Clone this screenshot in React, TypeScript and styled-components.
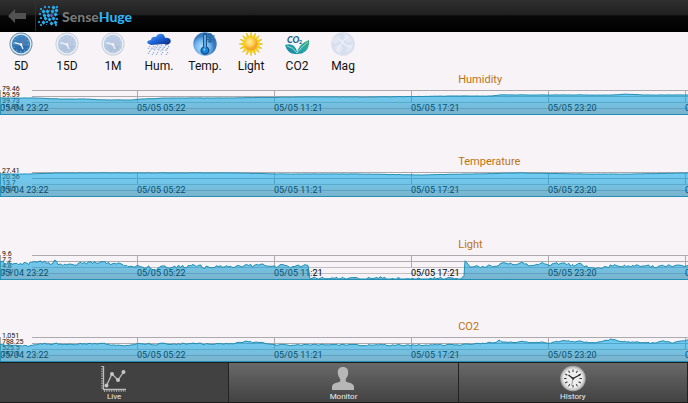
import React from "react";
import styled, { createGlobalStyle, css } from "styled-components";

const GlobalStyle = createGlobalStyle`
  * { box-sizing: border-box; }
  body { margin: 0; background: #f7f3f7; font-family: Roboto, "Noto Sans", sans-serif; }
`;

const Screen = styled.div`
  display: flex;
  flex-direction: column;
  min-height: 100vh;
  overflow: hidden;
  background: #f7f3f7;
`;

const Header = styled.header`
  display: flex;
  align-items: center;
  height: 32px;
  background: linear-gradient(#303030, #202020 45%, #080808 50%, #000 100%);
`;

const BackButton = styled.button`
  display: flex;
  align-items: center;
  justify-content: center;
  width: 36px;
  height: 30px;
  padding: 0 2px 0 0;
  border: 0;
  border-right: 1px solid #303030;
  background: none;
`;

const Brand = styled.h1`
  display: flex;
  align-items: center;
  gap: 3px;
  margin: 0 0 0 2px;
  font: 900 14px/20px Lato, sans-serif;
  color: #2eb2f2;
`;

const BrandName = styled.span`
  padding-top: 2px;
`;

const BrandMuted = styled.span`
  color: #77797b;
`;

const Toolbar = styled.nav`
  display: flex;
  gap: 4px;
  height: 40px;
`;

const Tool = styled.button<{ $dim?: boolean }>`
  display: flex;
  flex-direction: column;
  align-items: center;
  width: 42px;
  padding: 0;
  border: 0;
  background: none;
  color: #111;
  font: 12px/16px Roboto, sans-serif;

  svg {
    flex: none;
    margin-bottom: 2px;
    opacity: ${(p) => (p.$dim ? 0.35 : 1)};
  }
`;

const Charts = styled.main`
  display: flex;
  flex: 1;
  flex-direction: column;
  justify-content: space-between;
`;

const ChartTitle = styled.h2`
  margin: 0 0 3px;
  padding: 1px 0 0 66.6%;
  color: #bd7310;
  font: 11px/14px Roboto, sans-serif;
`;

const Plot = styled.div`
  position: relative;
  height: 25px;
`;

const Layer = styled.svg`
  position: absolute;
  inset: 0;
  width: 100%;
  height: 100%;
  overflow: hidden;
`;

const Scale = styled.div`
  position: absolute;
  top: -4px;
  left: 2px;
  color: #111;
  font: 7px/6px Roboto, sans-serif;
`;

const TimeLabel = styled.span`
  position: absolute;
  top: 12px;
  color: #000;
  font: 9px/12px Roboto, sans-serif;
  white-space: nowrap;
`;

const Tabs = styled.nav`
  display: grid;
  grid-template-columns: repeat(3, 1fr);
  height: 41px;
  border-top: 1px solid #1b1b1b;
  border-bottom: 1px solid #1b1b1b;
`;

const Tab = styled.button<{ $active?: boolean }>`
  display: flex;
  flex-direction: column;
  align-items: center;
  padding: 2px 0 0;
  border: 0;
  border-right: 1px solid #222;
  color: #eee;
  font: 8px/10px Roboto, sans-serif;
  ${(p) =>
    p.$active
      ? css`background: #414141;`
      : css`background: linear-gradient(#6a696a, #434243);`}
`;

const WIDTH = 688;
const HEIGHT = 25;
const TICKS = [0, 137, 274, 411, 548, 685];
const TIMES = ["05/04 23:22", "05/05 05:22", "05/05 11:21", "05/05 17:21", "05/05 23:20", "05/06 05:20"];

type Point = [number, number];
type Series = { name: string; scale: string[]; noise: number; points: Point[] };

const SERIES: Series[] = [
  {
    name: "Humidity",
    scale: ["79.46", "59.59", "39.73", "19.86"],
    noise: 0.15,
    points: [[0, 8], [32, 8], [60, 9], [85, 9], [102, 10], [132, 10], [142, 9], [170, 8], [230, 8], [300, 7], [370, 7], [458, 6], [490, 6], [500, 5], [560, 5], [612, 5], [625, 4], [645, 5], [688, 5]],
  },
  {
    name: "Temperature",
    scale: ["27.41", "20.56", "13.7", "6.85"],
    noise: 0.15,
    points: [[0, 2], [30, 2], [60, 1], [110, 1], [140, 1], [180, 1], [210, 1], [230, 1], [280, 2], [360, 2], [420, 3], [470, 2], [520, 1], [580, 2], [610, 2], [630, 2], [688, 1]],
  },
  {
    name: "Light",
    scale: ["9.6", "7.2", "4.8", "2.4"],
    noise: 2,
    points: [[0, 8], [52, 8], [55, 6], [57, 9], [90, 8], [124, 10], [135, 12], [160, 13], [180, 11], [200, 12], [230, 12], [270, 11], [304, 11], [308, 11], [310, 24], [350, 24], [366, 23], [400, 24], [461, 24], [464, 22], [465, 7], [470, 11], [500, 10], [560, 9], [600, 12], [618, 9], [650, 11], [688, 11]],
  },
  {
    name: "CO2",
    scale: ["1,051", "788.25", "525.5", "262.8"],
    noise: 0.9,
    points: [[0, 8], [15, 8], [30, 9], [45, 7], [80, 7], [100, 7], [120, 9], [140, 7], [180, 7], [184, 6], [188, 7], [230, 7], [245, 5], [270, 7], [280, 8], [330, 8], [400, 8], [460, 8], [480, 6], [496, 5], [499, 3], [502, 6], [530, 5], [548, 6], [565, 4], [580, 5], [596, 5], [611, 2], [625, 4], [650, 6], [664, 4], [672, 6], [688, 3]],
  },
];

function trace({ points, noise }: Series): string {
  const out: string[] = [];
  let seed = 17;
  let drift = 0;
  let segment = 0;
  for (let x = 0; x <= WIDTH; x += 1) {
    while (segment < points.length - 2 && x > points[segment + 1][0]) segment += 1;
    const [x0, y0] = points[segment];
    const [x1, y1] = points[segment + 1];
    if (x % 2 === 0) {
      seed = (seed * 16807) % 2147483647;
      drift = drift * 0.45 + (seed / 2147483647 - 0.5) * noise * 1.6;
    }
    const y = y0 + ((y1 - y0) * (x - x0)) / (x1 - x0) + drift;
    out.push(`${x} ${Math.min(24, Math.max(0.5, y)).toFixed(2)}`);
  }
  return out.join("L");
}

function Chart({ series }: { series: Series }) {
  const line = trace(series);
  const fill = `fill-${series.name}`;
  return (
    <section>
      <ChartTitle>{series.name}</ChartTitle>
      <Plot>
        <Layer viewBox={`0 0 ${WIDTH} ${HEIGHT}`} preserveAspectRatio="none" aria-hidden="true">
          <path d="M32 .5H688M32 6.5H688" stroke="#acaaac" fill="none" />
          <path d="M32 12.5H688M32 18.5H688" stroke="#c2bfc2" fill="none" />
          <path d={TICKS.map((x) => `M${x + 0.5} 0V12`).join("")} stroke="#acaaac" fill="none" />
        </Layer>
        <Scale>
          {series.scale.map((value) => (
            <div key={value}>{value}</div>
          ))}
        </Scale>
        {TIMES.map((time, i) => (
          <TimeLabel key={time} style={{ left: `${(TICKS[i] / WIDTH) * 100}%` }}>
            {time}
          </TimeLabel>
        ))}
        <Layer viewBox={`0 0 ${WIDTH} ${HEIGHT}`} preserveAspectRatio="none" aria-hidden="true">
          <defs>
            <linearGradient id={fill} x1="0" x2="0" y1="0" y2="25" gradientUnits="userSpaceOnUse">
              <stop offset="0" stopColor="#00aaf5" />
              <stop offset=".4" stopColor="#009fdc" />
              <stop offset="1" stopColor="#147aa7" />
            </linearGradient>
          </defs>
          <path d={`M0 25L${line}L688 25Z`} fill={`url(#${fill})`} fillOpacity=".54" />
          <path d={`M.5 25L${line}`} fill="none" stroke="#2190b5" />
          <path d="M0 24.5H688" stroke="#2190b5" />
        </Layer>
      </Plot>
    </section>
  );
}

function LogoMark() {
  const dots: [number, number, number][] = [
    [2, 3, 2], [6, 1, 2], [10, 1, 2], [14, 1, 3], [18, 1, 2], [4, 5, 3], [8, 5, 3], [13, 5, 3], [17, 4, 3],
    [1, 8, 2], [5, 9, 3], [9, 9, 3], [12, 9, 3], [16, 8, 3], [19, 9, 1], [2, 12, 2], [6, 12, 3], [10, 13, 3],
    [14, 12, 3], [18, 13, 2], [0, 16, 2], [4, 16, 3], [8, 16, 2], [12, 17, 3], [16, 16, 3], [2, 19, 2],
    [8, 19, 1], [17, 19, 2], [11, 5, 1],
  ];
  return (
    <svg width="21" height="22" viewBox="0 0 21 22" aria-hidden="true">
      {dots.map(([x, y, s]) => (
        <rect key={`${x}-${y}`} x={x} y={y} width={s} height={s} rx=".6" fill={x > 9 && x < 15 && y > 8 && y < 12 ? "#665ca6" : "#27aef0"} transform={`rotate(40 ${x + s / 2} ${y + s / 2})`} />
      ))}
    </svg>
  );
}

function ClockIcon() {
  return (
    <svg width="24" height="24" viewBox="0 0 24 24" aria-hidden="true">
      <circle cx="12" cy="12" r="11.5" fill="#718da4" />
      <circle cx="12" cy="12" r="10.6" fill="#e1ebf1" />
      <circle cx="12" cy="12" r="9.2" fill="#3c80be" />
      <path d="M3.5 14A9 9 0 0 0 20.5 14Z" fill="#2c6dac" />
      <circle cx="12" cy="12" r="7.6" fill="none" stroke="#b8daf3" strokeDasharray=".8 3.18" />
      <path d="M5.500 10.700L12 12.500 14 17" fill="none" stroke="#fff" strokeWidth="1.2" />
      <path d="M11 14L17 5.800" stroke="#be6072" strokeWidth=".9" />
      <circle cx="12" cy="12.500" r="1.200" fill="#fff" />
    </svg>
  );
}

function RainIcon() {
  return (
    <svg width="24" height="24" viewBox="0 0 24 24" aria-hidden="true">
      <defs>
        <linearGradient id="cloud" x1="0" x2="1" y1="0" y2="1">
          <stop offset="0" stopColor="#69b6fb" />
          <stop offset=".5" stopColor="#1d62d6" />
          <stop offset="1" stopColor="#0d2779" />
        </linearGradient>
      </defs>
      <path d="M2 12C-1 11 0 8 4 8 4 5 7 4 9 5 11 0 18 1 18 6 23 5 25 9 23 11Q21 14 17 12L4 13Z" fill="url(#cloud)" />
      <path d="M3 14L1 17M7 14L4 18M11 13L7 19M15 13L11 19M19 13L15 19M22 14L19 19M3 19L1 22M7 20L5 23M11 20L9 23M16 20L14 23M21 20L19 23" stroke="#6d9bdc" strokeDasharray="1.6 .9" />
      <path d="M5 15L3 19M9 14L6 18M13 14L10 18M17 14L13 20M20 16L18 19" stroke="#adb9d6" strokeWidth=".7" />
    </svg>
  );
}

function TempIcon() {
  return (
    <svg width="24" height="24" viewBox="0 0 24 24" aria-hidden="true">
      <defs>
        <radialGradient id="temp" cx=".4" cy=".65">
          <stop offset="0" stopColor="#b8e3ff" />
          <stop offset=".65" stopColor="#70b3ed" />
          <stop offset="1" stopColor="#3978bc" />
        </radialGradient>
      </defs>
      <circle cx="12" cy="12" r="11.7" fill="url(#temp)" />
      <path d="M17 1V11M12.5 3.5L21.5 8.5M21.5 3.5L12.5 8.5M15 2L17 4 19 2M15 10L17 8 19 10" fill="none" stroke="#286aa5" strokeWidth="1.4" />
      <path d="M10 3Q10 1 12 1T14 3V14.5A4.5 4.5 0 1 1 10 14.5Z" fill="#1b548b" />
      <path d="M12 3V16" stroke="#7cc7fa" strokeWidth="1.5" />
      <circle cx="12" cy="18.3" r="3" fill="#1585df" />
      <circle cx="11.3" cy="17.5" r="1" fill="#8dd5ff" />
    </svg>
  );
}

function SunIcon() {
  const rays = Array.from({ length: 16 }, (_, i) => i * 22.5);
  return (
    <svg width="24" height="24" viewBox="0 0 24 24" aria-hidden="true">
      <defs>
        <radialGradient id="sun" cx=".4" cy=".35">
          <stop offset="0" stopColor="#fff0a0" />
          <stop offset=".6" stopColor="#ffcd50" />
          <stop offset="1" stopColor="#f2a42c" />
        </radialGradient>
      </defs>
      {rays.map((angle) => (
        <path key={angle} d="M10.6 6L12 .2 13.4 6Z" fill="#ffe000" stroke="#d9ad00" strokeWidth=".5" transform={`rotate(${angle} 12 12)`} />
      ))}
      <circle cx="12" cy="12" r="7" fill="url(#sun)" stroke="#f5cf15" strokeWidth=".9" />
    </svg>
  );
}

function LeafIcon() {
  return (
    <svg width="24" height="24" viewBox="0 0 24 24" aria-hidden="true">
      <defs>
        <linearGradient id="leaf" x1="0" x2="1" y1="1" y2="0">
          <stop offset="0" stopColor="#167ca5" />
          <stop offset=".55" stopColor="#28a8a6" />
          <stop offset="1" stopColor="#35a96d" />
        </linearGradient>
      </defs>
      <text x="2" y="11" fill="#17648b" fontFamily="Lato" fontSize="9" fontWeight="900" fontStyle="italic">CO</text>
      <text x="14" y="12" fill="#17648b" fontFamily="Lato" fontSize="5" fontWeight="900">2</text>
      <path d="M0 13Q10 10 12 20 15 11 24 8 25 22 12 22 3 23 0 13Z" fill="url(#leaf)" />
      <path d="M2 14Q8 15 12 21 16 15 23 10" fill="none" stroke="#bde8db" strokeWidth=".8" />
    </svg>
  );
}

function MagIcon() {
  return (
    <svg width="26" height="24" viewBox="0 0 26 24" aria-hidden="true">
      <circle cx="13" cy="12" r="11.8" fill="#9dbbe0" />
      <path d="M4 6L9 3 10 8 6 12 2 10ZM14 2L19 4 22 9 18 11 15 7ZM5 15L10 12 13 16 10 22 6 19ZM17 14L23 12 21 18 16 21Z" fill="#bdd3ea" />
      <path d="M7 19L13 9 18 4M9 7L15 13 22 15" fill="none" stroke="#e6f0f8" strokeWidth="1.2" />
    </svg>
  );
}

const TOOLS: { label: string; icon: React.ReactNode; dim?: boolean }[] = [
  { label: "5D", icon: <ClockIcon /> },
  { label: "15D", icon: <ClockIcon />, dim: true },
  { label: "1M", icon: <ClockIcon />, dim: true },
  { label: "Hum.", icon: <RainIcon /> },
  { label: "Temp.", icon: <TempIcon /> },
  { label: "Light", icon: <SunIcon /> },
  { label: "CO2", icon: <LeafIcon /> },
  { label: "Mag", icon: <MagIcon />, dim: true },
];

function LiveIcon() {
  return (
    <svg width="26" height="27" viewBox="0 0 26 27" aria-hidden="true">
      <path d="M2.5 1V24.5H25" fill="none" stroke="#bdbdbd" strokeWidth="1.3" />
      <path d="M1 1V24" stroke="#bdbdbd" strokeWidth="1.6" strokeDasharray="1 1.4" />
      <path d="M3 26H25" stroke="#bdbdbd" strokeWidth="1.6" strokeDasharray="1 1.4" />
      <path d="M5.5 20.5L11 9 17 15 22.5 7" fill="none" stroke="#bdbdbd" strokeWidth="1.3" />
      <g fill="#c6c6c6">
        <circle cx="5.5" cy="20.5" r="2" />
        <circle cx="11" cy="9" r="2" />
        <circle cx="17" cy="15" r="2" />
        <circle cx="22.5" cy="7" r="2" />
      </g>
    </svg>
  );
}

function PersonIcon() {
  return (
    <svg width="24" height="27" viewBox="0 0 24 27" aria-hidden="true">
      <path d="M12 2C15.8 2 17.400 4.500 17.200 8 17 11 15.800 12.500 14.800 14V16.500C18 18 23 18 23 22V25H1V22C1 18 6 18 9.200 16.500V14C8.200 12.500 7 11 6.800 8 6.600 4.500 8.200 2 12 2Z" fill="#b7b7b7" />
    </svg>
  );
}

function HistoryIcon() {
  const marks = Array.from({ length: 12 }, (_, i) => i * 30);
  return (
    <svg width="26" height="27" viewBox="0 0 26 27" aria-hidden="true">
      <circle cx="13" cy="13.5" r="12.7" fill="#a9a9a9" />
      <circle cx="13" cy="13.5" r="11.5" fill="#cdcdcd" />
      <circle cx="13" cy="13.5" r="10" fill="#ededed" />
      {marks.map((angle) => (
        <path key={angle} d="M13 4.5V7" stroke="#333" strokeWidth="1" transform={`rotate(${angle} 13 13.5)`} />
      ))}
      <path d="M8.5 10L13 13.5 20.5 9.5" fill="none" stroke="#292929" strokeWidth="1.3" />
      <path d="M13.5 12.5L11.5 20.5" stroke="#888" strokeWidth=".8" />
      <circle cx="13" cy="13.5" r="1.2" fill="#333" />
    </svg>
  );
}

export default function App() {
  return (
    <Screen>
      <GlobalStyle />
      <Header>
        <BackButton aria-label="Back">
          <svg width="18" height="14" viewBox="0 0 18 14" aria-hidden="true">
            <path d="M0 7L7 0V4H18V10H7V14Z" fill="#525252" />
          </svg>
        </BackButton>
        <Brand>
          <LogoMark />
          <BrandName>
            <BrandMuted>Sense</BrandMuted>Huge
          </BrandName>
        </Brand>
      </Header>
      <Toolbar aria-label="Range and sensors">
        {TOOLS.map(({ label, icon, dim }) => (
          <Tool key={label} $dim={dim}>
            {icon}
            {label}
          </Tool>
        ))}
      </Toolbar>
      <Charts>
        {SERIES.map((series) => (
          <Chart key={series.name} series={series} />
        ))}
      </Charts>
      <Tabs>
        <Tab $active>
          <LiveIcon />
          Live
        </Tab>
        <Tab>
          <PersonIcon />
          Monitor
        </Tab>
        <Tab>
          <HistoryIcon />
          History
        </Tab>
      </Tabs>
    </Screen>
  );
}
